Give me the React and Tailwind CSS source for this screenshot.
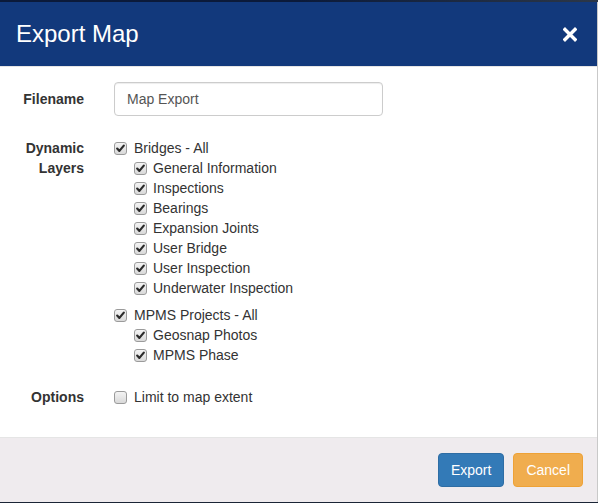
import React from 'react';

const font = { fontFamily: '"Liberation Sans", Arial, Helvetica, sans-serif' };

const Check = ({ checked = true }) => (
  <span className="inline-flex h-[13px] w-[13px] shrink-0 items-center justify-center rounded-[3px] border border-[#9b9b9b] bg-gradient-to-b from-[#f4f4f4] to-[#d9d9d9]">
    {checked && (
      <svg width="9" height="9" viewBox="0 0 9 9">
        <path d="M1.2 4.6 L3.4 6.9 L7.8 1.6" fill="none" stroke="#2b2b2b" strokeWidth="2.2" strokeLinecap="round" strokeLinejoin="round" />
      </svg>
    )}
  </span>
);

const Row = ({ label, nested = false, checked = true }) => (
  <label className={`flex h-5 items-center ${nested ? 'pl-5 gap-[6px]' : 'gap-[7px]'}`}>
    <Check checked={checked} />
    <span className="text-[14px] leading-5 text-[#333]">{label}</span>
  </label>
);

const bridges = [
  'General Information',
  'Inspections',
  'Bearings',
  'Expansion Joints',
  'User Bridge',
  'User Inspection',
  'Underwater Inspection',
];

const mpms = ['Geosnap Photos', 'MPMS Phase'];

export default function App() {
  return (
    <div className="flex h-[503px] w-[598px] flex-col bg-[#1b2536]" style={font}>
      <div className="h-[2px] bg-gradient-to-r from-[#0b1a3a] via-[#0b1a3a] to-[#2c3748]" />
      <div className="flex flex-col border-r border-[#c9c9c9] bg-white">
        {/* header */}
        <div className="flex h-[65px] items-center justify-between border-b border-[#e5e5e5] bg-[#12397c] pl-[16px] pr-[20px]">
          <h4 className="text-[24px] leading-[34px] text-white">Export Map</h4>
          <svg width="14" height="15" viewBox="0 0 14 15" className="mt-[1px]">
            <path d="M2 2.5 L12 12.5 M12 2.5 L2 12.5" stroke="#fff" strokeWidth="3.4" strokeLinecap="square" />
          </svg>
        </div>

        {/* body */}
        <div className="flex flex-col p-[15px] text-[14px] text-[#333]">
          <div className="mb-[15px] flex items-center">
            <div className="w-[69px] text-right font-bold">Filename</div>
            <input
              defaultValue="Map Export"
              className="ml-[30px] h-[34px] w-[269px] rounded-[4px] border border-[#ccc] px-3 text-[14px] text-[#555] shadow-[inset_0_1px_1px_rgba(0,0,0,0.075)] outline-none"
              style={font}
            />
          </div>

          <div className="mb-[15px] flex">
            <div className="w-[69px] pt-[7px] text-right font-bold leading-5">
              Dynamic
              <br />
              Layers
            </div>
            <div className="ml-[30px] flex flex-col pt-[7px]">
              <Row label="Bridges - All" />
              {bridges.map((b) => (
                <Row key={b} label={b} nested />
              ))}
              <div className="h-[7px]" />
              <Row label="MPMS Projects - All" />
              {mpms.map((m) => (
                <Row key={m} label={m} nested />
              ))}
            </div>
          </div>

          <div className="mb-[15px] flex">
            <div className="w-[69px] pt-[7px] text-right font-bold leading-5">Options</div>
            <div className="ml-[30px] flex flex-col pt-[7px]">
              <Row label="Limit to map extent" checked={false} />
            </div>
          </div>
        </div>

        {/* footer */}
        <div className="flex justify-end gap-[9px] border-t border-[#e5e5e5] bg-[#efebee] py-[15px] pl-[15px] pr-[14px]">
          <button className="h-[34px] rounded-[4px] border border-[#2e6da4] bg-[#337ab7] px-3 text-[14px] text-white">
            Export
          </button>
          <button className="h-[34px] rounded-[4px] border border-[#eea236] bg-[#f0ad4e] px-3 text-[14px] text-white">
            Cancel
          </button>
        </div>
      </div>
    </div>
  );
}
